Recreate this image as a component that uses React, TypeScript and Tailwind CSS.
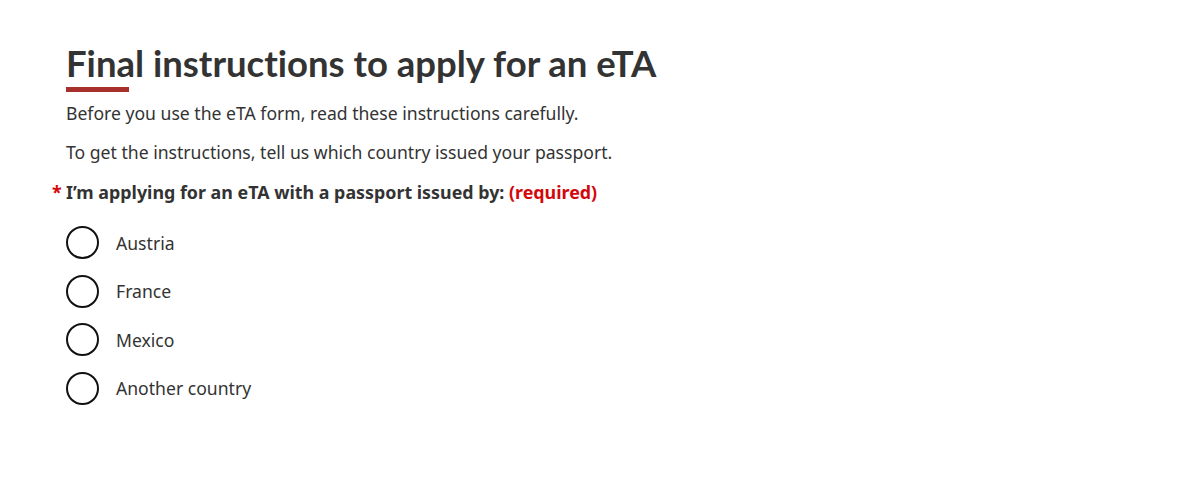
const countries = ['Austria', 'France', 'Mexico', 'Another country'];

export default function App() {
  return (
    <div className="min-h-[498px] w-full bg-white pl-[66px] pt-[40px] text-[#333] [font-family:'Noto_Sans',sans-serif]">
      <h1 className="text-[36.5px] font-bold leading-[46px] text-[#333] [font-variant-ligatures:none] [font-family:Lato,sans-serif]">
        Final instructions to apply for an eTA
      </h1>
      <div className="mt-[1px] h-[5px] w-[63px] bg-[#a8302a]" />
      <p className="mt-[9px] text-[17.6px] leading-[24px]">
        Before you use the eTA form, read these instructions carefully.
      </p>
      <p className="mt-[15px] text-[17.6px] leading-[24px]">
        To get the instructions, tell us which country issued your passport.
      </p>
      <fieldset className="mt-[16px]">
        <legend className="relative text-[17.85px] font-bold leading-[24px]">
          <span className="absolute -left-[14px] text-[#d3080c]">*</span>
          I’m applying for an eTA with a passport issued by:{' '}
          <span className="text-[#d3080c]">(required)</span>
        </legend>
        <div className="mt-[22px] flex flex-col gap-[15.5px]">
          {countries.map((c) => (
            <label key={c} className="flex items-center gap-[17px]">
              <span className="h-[33px] w-[33px] rounded-full border-2 border-[#111] bg-white" />
              <span className="text-[17.6px] leading-[24px]">{c}</span>
            </label>
          ))}
        </div>
      </fieldset>
    </div>
  );
}
